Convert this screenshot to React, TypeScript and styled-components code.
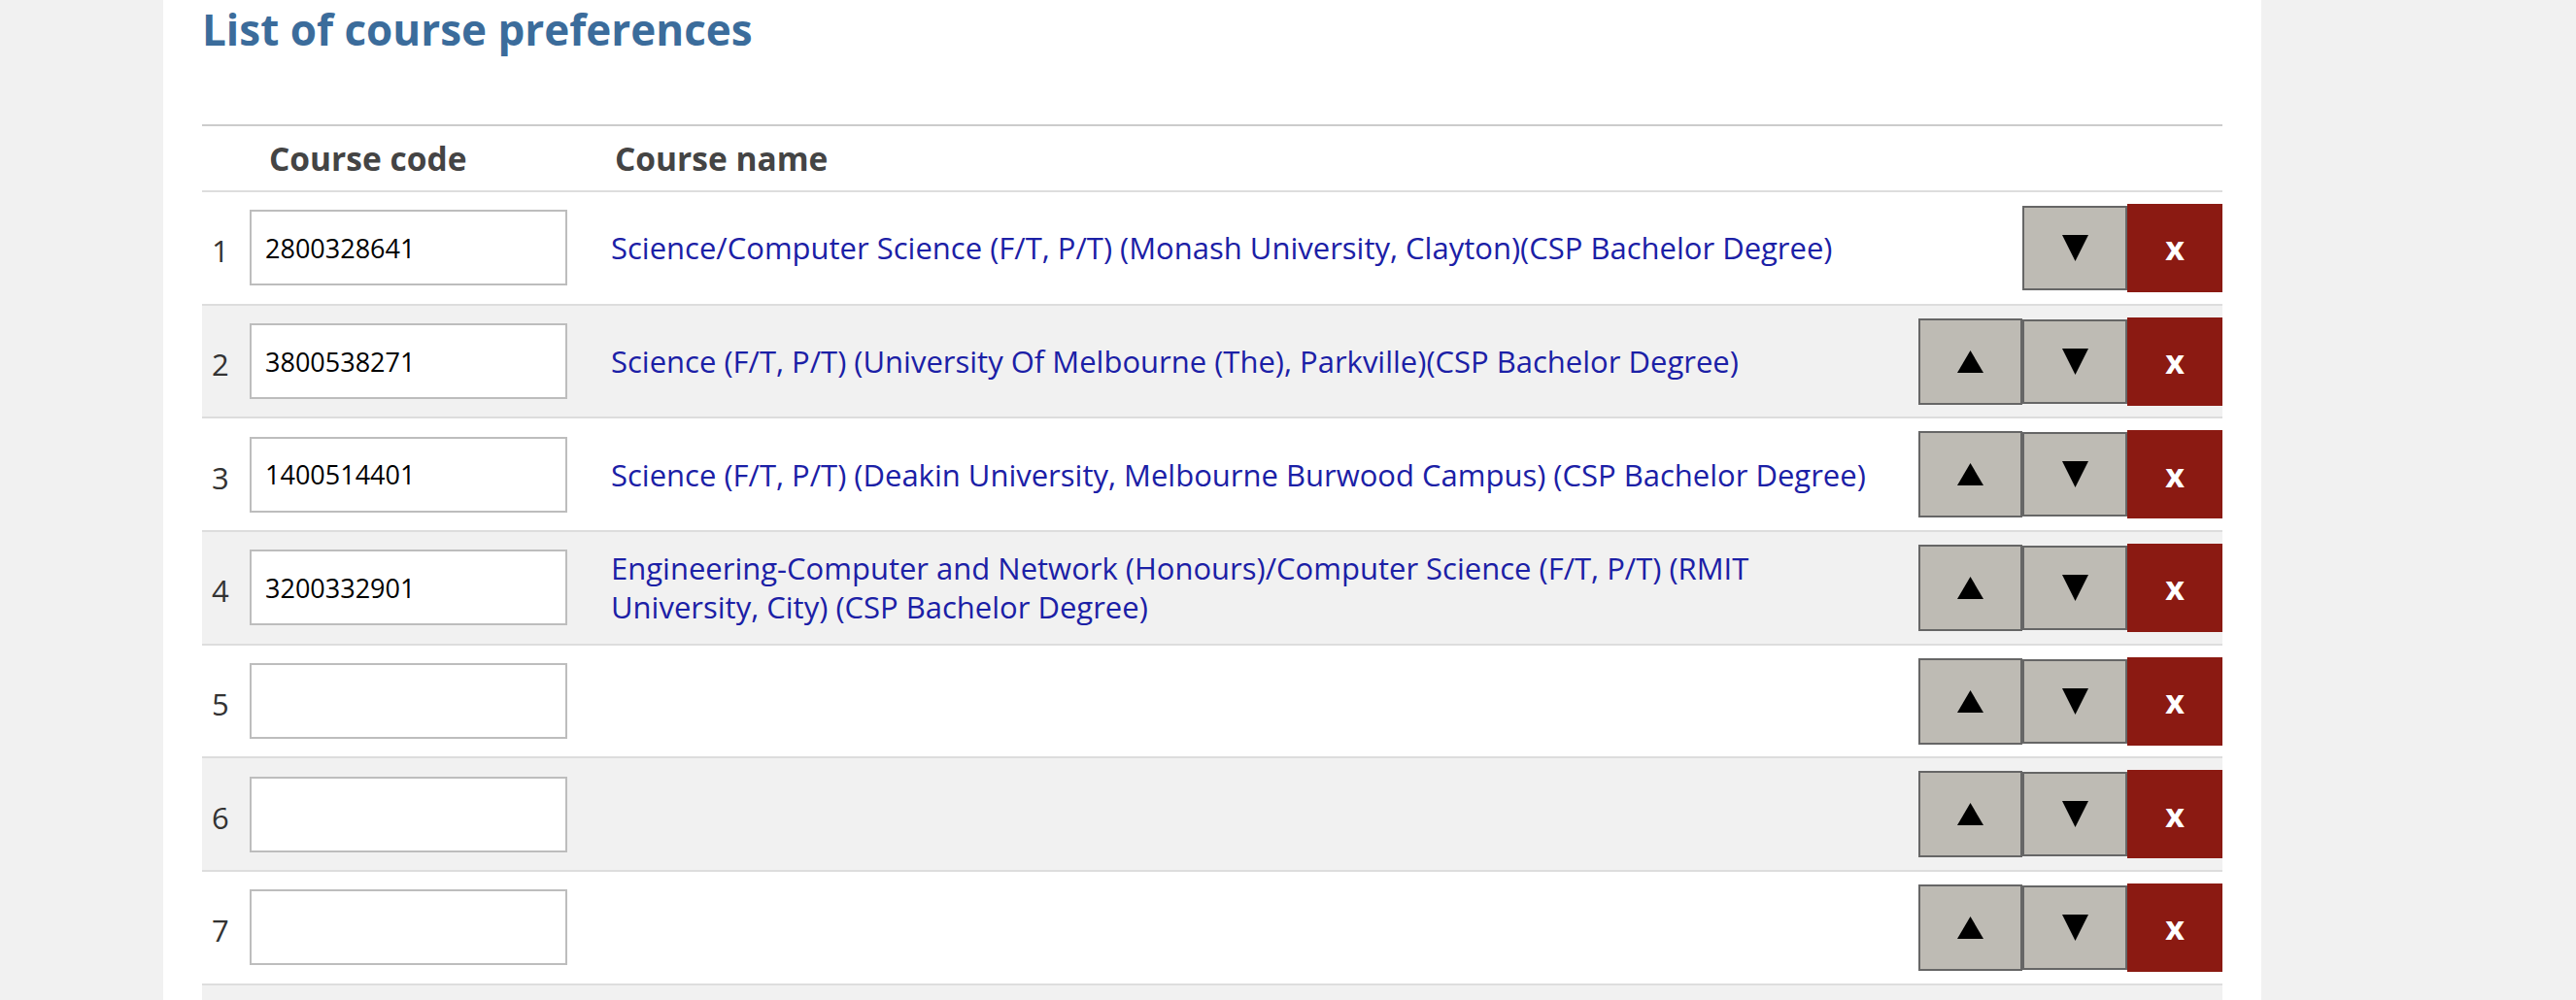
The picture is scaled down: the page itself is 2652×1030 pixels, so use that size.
import styled, { createGlobalStyle } from "styled-components";
import { useState } from "react";

const GlobalStyle = createGlobalStyle`
  html, body {
    margin: 0;
    padding: 0;
    background: #f1f1f1;
    font-family: "Open Sans", "Noto Sans", sans-serif;
  }
`;

type Preference = { code: string; name: string };

const initial: Preference[] = [
  {
    code: "2800328641",
    name: "Science/Computer Science (F/T, P/T) (Monash University, Clayton)(CSP Bachelor Degree)",
  },
  {
    code: "3800538271",
    name: "Science (F/T, P/T) (University Of Melbourne (The), Parkville)(CSP Bachelor Degree)",
  },
  {
    code: "1400514401",
    name: "Science (F/T, P/T) (Deakin University, Melbourne Burwood Campus) (CSP Bachelor Degree)",
  },
  {
    code: "3200332901",
    name: "Engineering-Computer and Network (Honours)/Computer Science (F/T, P/T) (RMIT University, City) (CSP Bachelor Degree)",
  },
  { code: "", name: "" },
  { code: "", name: "" },
  { code: "", name: "" },
];

const UpArrow = () => (
  <svg width="27" height="23" viewBox="0 0 27 23">
    <polygon points="13.5,0 27,23 0,23" fill="#000" />
  </svg>
);

const DownArrow = () => (
  <svg width="27" height="27" viewBox="0 0 27 27">
    <polygon points="0,0 27,0 13.5,27" fill="#000" />
  </svg>
);

const App = () => {
  const [prefs, setPrefs] = useState(initial);

  const move = (index: number, dir: number) => {
    const next = [...prefs];
    const tmp = next[index];
    next[index] = next[index + dir];
    next[index + dir] = tmp;
    setPrefs(next);
  };

  const remove = (index: number) => {
    const next = prefs.filter((_, i) => i !== index);
    next.push({ code: "", name: "" });
    setPrefs(next);
  };

  return (
    <Page>
      <GlobalStyle />
      <Gutter />
      <Panel>
        <Title>List of course preferences</Title>
        <Table>
          <HeaderRow>
            <span />
            <HeaderCell $indent={20}>Course code</HeaderCell>
            <HeaderCell $indent={4}>Course name</HeaderCell>
            <span />
          </HeaderRow>
          {prefs.map((pref, index) => (
            <Row key={index} $shaded={index % 2 === 1}>
              <Num>{index + 1}</Num>
              <div>
                <CodeInput
                  type="text"
                  value={pref.code}
                  onChange={(e) => {
                    const next = [...prefs];
                    next[index] = { ...next[index], code: e.target.value };
                    setPrefs(next);
                  }}
                />
              </div>
              <Name>{pref.name && <a href="#">{pref.name}</a>}</Name>
              <Actions>
                {index > 0 && (
                  <MoveButton $up type="button" onClick={() => move(index, -1)}>
                    <UpArrow />
                  </MoveButton>
                )}
                <MoveButton type="button" onClick={() => index < prefs.length - 1 && move(index, 1)}>
                  <DownArrow />
                </MoveButton>
                <DeleteButton type="button" onClick={() => remove(index)}>
                  x
                </DeleteButton>
              </Actions>
            </Row>
          ))}
          <Row $shaded={prefs.length % 2 === 1} />
        </Table>
      </Panel>
    </Page>
  );
};

const Page = styled.div`
  display: flex;
  height: 100vh;
  overflow: hidden;
  background: #f1f1f1;
`;

const Gutter = styled.div`
  width: 168px;
  flex-shrink: 0;
`;

const Panel = styled.main`
  width: 2160px;
  flex-shrink: 0;
  box-sizing: border-box;
  padding: 0 40px;
  background: #fff;
`;

const Title = styled.h2`
  margin: 0 0 67px;
  font-size: 44px;
  font-weight: 700;
  line-height: 61px;
  color: #3b6c9b;
`;

const Table = styled.div`
  border-top: 2px solid #cccccc;
`;

const columns = `
  display: grid;
  grid-template-columns: 49px 372px 1fr 314px;
  align-items: center;
  border-bottom: 2px solid #dddddd;
`;

const HeaderRow = styled.div`
  ${columns}
  height: 68px;
  box-sizing: border-box;
`;

const HeaderCell = styled.div<{ $indent: number }>`
  padding-left: ${(p) => p.$indent}px;
  font-size: 33.5px;
  font-weight: 700;
  color: #444;
`;

const Row = styled.div<{ $shaded: boolean }>`
  ${columns}
  height: 116.7px;
  box-sizing: border-box;
  background: ${(p) => (p.$shaded ? "#f1f1f1" : "#fff")};
`;

const Num = styled.div`
  padding-left: 10px;
  padding-top: 6px;
  font-size: 31px;
  color: #333;
`;

const CodeInput = styled.input`
  display: block;
  width: 327px;
  height: 78px;
  box-sizing: border-box;
  margin: 0;
  padding: 0 0 0 14px;
  border: 2px solid #bdbdbd;
  border-radius: 0;
  background: #fff;
  font-family: "Open Sans", "Noto Sans", sans-serif;
  font-size: 27px;
  color: #000;
  outline: none;
`;

const Name = styled.div`
  padding-right: 44px;
  font-size: 31px;
  line-height: 40px;
  a {
    color: #1b20a6;
    text-decoration: none;
  }
`;

const Actions = styled.div`
  display: flex;
  justify-content: flex-end;
  align-items: center;
`;

const MoveButton = styled.button<{ $up?: boolean }>`
  display: flex;
  align-items: center;
  justify-content: center;
  width: ${(p) => (p.$up ? 107 : 108)}px;
  height: ${(p) => (p.$up ? 89 : 87)}px;
  box-sizing: border-box;
  margin: 0;
  padding: 0;
  border: 2px solid #666;
  border-radius: 0;
  background: #bebbb4;
  cursor: pointer;
`;

const DeleteButton = styled.button`
  width: 98px;
  height: 91px;
  margin: 0;
  padding: 0;
  border: none;
  border-radius: 0;
  background: #8b1a12;
  color: #fff;
  font-family: "Open Sans", "Noto Sans", sans-serif;
  font-size: 34px;
  font-weight: 700;
  cursor: pointer;
`;

export default App;
